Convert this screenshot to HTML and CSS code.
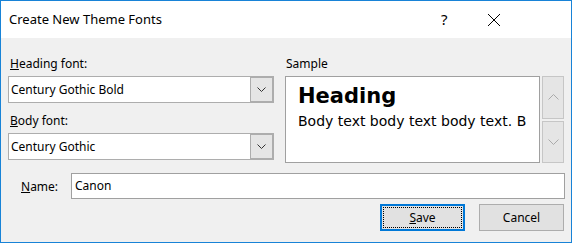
FILE: index.html
```html
<!DOCTYPE html>
<html lang="en">
<head>
    <meta charset="UTF-8">
    <title>Create New Theme Fonts</title>
    <link rel="stylesheet" href="styles.css">
</head>
<body>
    <div class="window">
        <!-- title bar -->
        <div class="titlebar">
            <span class="title">Create New Theme Fonts</span>
            <span class="help">?</span>
            <span class="close">
                <svg width="14" height="14" viewBox="0 0 14 14">
                    <path d="M1 1 L13 13 M13 1 L1 13" stroke="#000" stroke-width="1" fill="none"/>
                </svg>
            </span>
        </div>

        <div class="content">
            <div class="top-grid">
                <div class="fonts-col">
                    <label class="field-label"><u>H</u>eading font:</label>
                    <div class="combo">
                        <span class="combo-value">Century Gothic Bold</span>
                        <span class="combo-btn">
                            <svg width="9" height="5" viewBox="0 0 9 5"><path d="M0.5 0.5 L4.5 4.5 L8.5 0.5" stroke="#333" fill="none"/></svg>
                        </span>
                    </div>
                    <label class="field-label second"><u>B</u>ody font:</label>
                    <div class="combo">
                        <span class="combo-value">Century Gothic</span>
                        <span class="combo-btn">
                            <svg width="9" height="5" viewBox="0 0 9 5"><path d="M0.5 0.5 L4.5 4.5 L8.5 0.5" stroke="#333" fill="none"/></svg>
                        </span>
                    </div>
                </div>

                <div class="sample-col">
                    <label class="field-label">Sample</label>
                    <div class="sample-row">
                        <div class="sample-box">
                            <div class="sample-heading">Heading</div>
                            <div class="sample-body">Body text body text body text. B</div>
                        </div>
                        <div class="spin">
                            <span class="spin-btn">
                                <svg width="11" height="6" viewBox="0 0 11 6"><path d="M0.5 5.5 L5.5 0.5 L10.5 5.5" stroke="#aaa" fill="none"/></svg>
                            </span>
                            <span class="spin-btn">
                                <svg width="11" height="6" viewBox="0 0 11 6"><path d="M0.5 0.5 L5.5 5.5 L10.5 0.5" stroke="#aaa" fill="none"/></svg>
                            </span>
                        </div>
                    </div>
                </div>
            </div>

            <div class="name-row">
                <label class="name-label"><u>N</u>ame:</label>
                <div class="name-input">Canon</div>
            </div>

            <div class="button-row">
                <button class="btn btn-default"><span class="focus-ring"><u>S</u>ave</span></button>
                <button class="btn">Cancel</button>
            </div>
        </div>
    </div>
</body>
</html>
```

FILE: styles.css
```css
* {
    margin: 0;
    padding: 0;
    box-sizing: border-box;
}

body {
    width: 572px;
    height: 243px;
    overflow: hidden;
    font-family: "Noto Sans", "Open Sans", sans-serif;
    font-size: 12px;
    color: #000;
}

/* window frame */
.window {
    width: 572px;
    height: 243px;
    border: 1px solid #1883d7;
    background: #f0f0f0;
    display: flex;
    flex-direction: column;
}

.titlebar {
    height: 37px;
    background: #fff;
    display: flex;
    align-items: center;
    padding-left: 8px;
}

.title {
    font-size: 13px;
    flex: 1;
    padding-bottom: 1px;
}

.help {
    font-size: 15px;
    width: 46px;
    padding-bottom: 1px;
}

.close {
    width: 36px;
    margin-right: 48px;
    display: flex;
    align-items: center;
}

/* dialog content */
.content {
    flex: 1;
    padding: 18px 7px 0 7px;
}

.top-grid {
    display: grid;
    grid-template-columns: 266px minmax(0, 1fr);
    column-gap: 11px;
}

.field-label {
    display: block;
    height: 16px;
    line-height: 16px;
    margin-bottom: 4px;
    padding-left: 2px;
}

.field-label.second {
    margin-top: 10px;
}

.combo {
    height: 27px;
    background: #fff;
    border: 1px solid #adadad;
    display: flex;
    align-items: stretch;
}

.combo-value {
    flex: 1;
    line-height: 25px;
    padding-left: 2px;
}

.combo-btn {
    width: 23px;
    background: #e5e5e5;
    border: 1px solid #adadad;
    display: flex;
    align-items: center;
    justify-content: center;
}

.sample-col .field-label {
    padding-left: 1px;
}

.sample-row {
    display: flex;
    gap: 2px;
    height: 87px;
}

.sample-box {
    flex: 1;
    min-width: 0;
    background: #fff;
    border: 1px solid #a0a0a0;
    padding: 7px 10px 0 12px;
    overflow: hidden;
    white-space: nowrap;
    font-family: "Century Gothic", "URW Gothic", "DejaVu Sans", sans-serif;
}

.sample-heading {
    font-size: 21px;
    font-weight: bold;
    line-height: 25px;
}

.sample-body {
    font-size: 14px;
    line-height: 18px;
    margin-top: 3px;
}

.spin {
    width: 22px;
    flex-shrink: 0;
    display: flex;
    flex-direction: column;
    gap: 2px;
}

.spin-btn {
    flex: 1;
    background: #e5e5e5;
    border: 1px solid #c6c6c6;
    display: flex;
    align-items: center;
    justify-content: center;
}

/* name row */
.name-row {
    display: flex;
    align-items: center;
    margin-top: 10px;
    margin-right: -1px;
}

.name-label {
    width: 63px;
    padding-left: 13px;
}

.name-input {
    flex: 1;
    height: 26px;
    line-height: 24px;
    background: #fff;
    border: 1px solid #a0a0a0;
    padding-left: 3px;
}

/* buttons */
.button-row {
    display: flex;
    justify-content: flex-end;
    gap: 14px;
    margin-top: 5px;
}

.btn {
    width: 85px;
    height: 27px;
    background: #e1e1e1;
    border: 1px solid #adadad;
    font-family: inherit;
    font-size: 12px;
    color: #000;
    padding-bottom: 1px;
}

.btn-default {
    border: 2px solid #0078d7;
    padding: 1px;
}

.focus-ring {
    display: flex;
    align-items: center;
    justify-content: center;
    height: 100%;
    border: 1px dotted #000;
}
```
